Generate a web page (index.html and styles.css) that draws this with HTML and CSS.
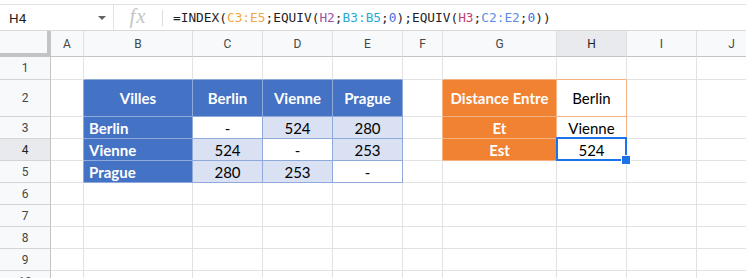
FILE: index.html
```html
<!DOCTYPE html>
<html lang="fr">
<head>
<meta charset="utf-8">
<title>Feuille</title>
<link rel="stylesheet" href="styles.css">
</head>
<body>
<div class="fbar">
  <div class="namebox">
    <span class="ref">H4</span>
    <svg class="caret" width="8" height="4" viewBox="0 0 8 4"><path d="M0 0H8L4 4Z" fill="#5f6368"/></svg>
  </div>
  <div class="fx">fx</div>
  <div class="sep"></div>
  <div class="formula">=INDEX(<span class="k1">C3:E5</span>;EQUIV(<span class="k2">H2</span>;<span class="k3">B3:B5</span>;<span class="kn">0</span>);EQUIV(<span class="k4">H3</span>;<span class="k5">C2:E2</span>;<span class="kn">0</span>))</div>
</div>
<div class="sheet">
  <div class="c corner"></div><div class="c ch">A</div><div class="c ch">B</div><div class="c ch">C</div><div class="c ch">D</div><div class="c ch">E</div><div class="c ch">F</div><div class="c ch">G</div><div class="c ch on">H</div><div class="c ch">I</div><div class="c ch">J</div>

  <div class="c rh">1</div><div class="c"></div><div class="c bbb"></div><div class="c bbb"></div><div class="c bbb"></div><div class="c bbb"></div><div class="c"></div><div class="c bbo"></div><div class="c bbo"></div><div class="c"></div><div class="c"></div>

  <div class="c rh">2</div><div class="c brb"></div><div class="c hd">Villes</div><div class="c hd">Berlin</div><div class="c hd">Vienne</div><div class="c hd">Prague</div><div class="c bro"></div><div class="c og">Distance Entre</div><div class="c ow">Berlin</div><div class="c"></div><div class="c"></div>

  <div class="c rh">3</div><div class="c brb"></div><div class="c hd left">Berlin</div><div class="c tw">-</div><div class="c tl">524</div><div class="c tl">280</div><div class="c bro"></div><div class="c og">Et</div><div class="c ow">Vienne</div><div class="c"></div><div class="c"></div>

  <div class="c rh on">4</div><div class="c brb"></div><div class="c hd left">Vienne</div><div class="c tl">524</div><div class="c tw">-</div><div class="c tl">253</div><div class="c bro"></div><div class="c og">Est</div><div class="c ow sel">524</div><div class="c"></div><div class="c"></div>

  <div class="c rh">5</div><div class="c brb"></div><div class="c hd left">Prague</div><div class="c tl">280</div><div class="c tl">253</div><div class="c tw">-</div><div class="c"></div><div class="c"></div><div class="c"></div><div class="c"></div><div class="c"></div>

  <div class="c rh">6</div><div class="c"></div><div class="c"></div><div class="c"></div><div class="c"></div><div class="c"></div><div class="c"></div><div class="c"></div><div class="c"></div><div class="c"></div><div class="c"></div>
  <div class="c rh">7</div><div class="c"></div><div class="c"></div><div class="c"></div><div class="c"></div><div class="c"></div><div class="c"></div><div class="c"></div><div class="c"></div><div class="c"></div><div class="c"></div>
  <div class="c rh">8</div><div class="c"></div><div class="c"></div><div class="c"></div><div class="c"></div><div class="c"></div><div class="c"></div><div class="c"></div><div class="c"></div><div class="c"></div><div class="c"></div>
  <div class="c rh">9</div><div class="c"></div><div class="c"></div><div class="c"></div><div class="c"></div><div class="c"></div><div class="c"></div><div class="c"></div><div class="c"></div><div class="c"></div><div class="c"></div>
  <div class="c rh">10</div><div class="c"></div><div class="c"></div><div class="c"></div><div class="c"></div><div class="c"></div><div class="c"></div><div class="c"></div><div class="c"></div><div class="c"></div><div class="c"></div>
</div>
</body>
</html>
```
FILE: styles.css
```css
* { box-sizing: border-box; }
html, body {
  margin: 0;
  padding: 0;
  background: #fff;
  overflow: hidden;
  width: 746px;
  height: 278px;
}
body { font-family: Roboto, "Liberation Sans", sans-serif; }

.fbar {
  margin-top: 4px;
  height: 27px;
  border-top: 1px solid #e1e3e1;
  border-bottom: 1px solid #d9d9d9;
  display: flex;
  align-items: center;
}
.namebox {
  width: 114px;
  height: 100%;
  border-right: 1px solid #e1e3e1;
  display: flex;
  align-items: center;
  padding-left: 9px;
  padding-right: 7px;
}
.ref { font-size: 13.5px; color: #1f1f1f; flex: 1; }
.caret { display: block; margin-top: 1px; }
.fx {
  width: 48px;
  text-align: center;
  font-family: "Liberation Serif", serif;
  font-style: italic;
  font-size: 21px;
  color: #c4c7c5;
  letter-spacing: 1px;
  margin-top: -3px;
}
.sep {
  width: 1px;
  height: 16px;
  background: #dadce0;
}
.formula {
  margin-left: 10px;
  font-family: "DejaVu Sans Mono", "Liberation Mono", monospace;
  font-size: 12.8px;
  color: #1f1f1f;
  white-space: nowrap;
}
.k1 { color: #f4a540; }
.k2 { color: #a14fa6; }
.k3 { color: #29a9d8; }
.k4 { color: #c24068; }
.k5 { color: #5b8de6; }
.kn { color: #3d70dc; }

.sheet {
  display: grid;
  grid-template-columns: 51px 33px 109px 70px 70px 70px 40px 114px 70px 70px 70px;
  grid-template-rows: 26px 23px 37px 22px 22px 22px 22px 22px 22px 22px 22px;
}
.c {
  border-right: 1px solid #e2e2e2;
  border-bottom: 1px solid #e2e2e2;
  display: flex;
  align-items: center;
  justify-content: center;
  font-family: Lato, "Liberation Sans", sans-serif;
  font-size: 15px;
  color: #000;
  white-space: nowrap;
  overflow: hidden;
}
.corner {
  background: #f8f9fa;
  border-right: 4px solid #c4c4c4;
  border-bottom: 4px solid #c4c4c4;
}
.ch {
  background: #f8f9fa;
  font-family: Roboto, sans-serif;
  font-size: 12px;
  color: #444746;
  border-right-color: #e0e0e0;
  border-bottom-color: #c4c4c4;
}
.rh {
  background: #f8f9fa;
  font-family: Roboto, sans-serif;
  font-size: 12px;
  color: #444746;
  border-right-color: #c4c4c4;
  border-bottom-color: #d4d4d4;
}
.on { background: #e8eaed; color: #1f1f1f; }

.bbb { border-bottom-color: #8eaadb; }
.brb { border-right-color: #8eaadb; }
.bbo { border-bottom-color: #f4b183; }
.bro { border-right-color: #f4b183; }

.hd {
  background: #4472c4;
  color: #fff;
  font-weight: 700;
  border-color: #8eaadb;
}
.left { justify-content: flex-start; padding-left: 5px; }
.tl { background: #d9e1f2; border-color: #8eaadb; }
.tw { background: #fff; border-color: #8eaadb; }

.og {
  background: #f08232;
  color: #fff;
  font-weight: 700;
  border-color: #f4b183;
}
.ow { background: #fff; border-color: #f4b183; }

.sel { position: relative; overflow: visible; }
.sel::after {
  content: "";
  position: absolute;
  left: -1px;
  top: -2px;
  right: -1px;
  bottom: -1px;
  border: 2px solid #1a73e8;
}
.sel::before {
  content: "";
  position: absolute;
  width: 8px;
  height: 8px;
  right: -5px;
  bottom: -5px;
  background: #1a73e8;
  border: 1px solid #fff;
  z-index: 2;
}
```
